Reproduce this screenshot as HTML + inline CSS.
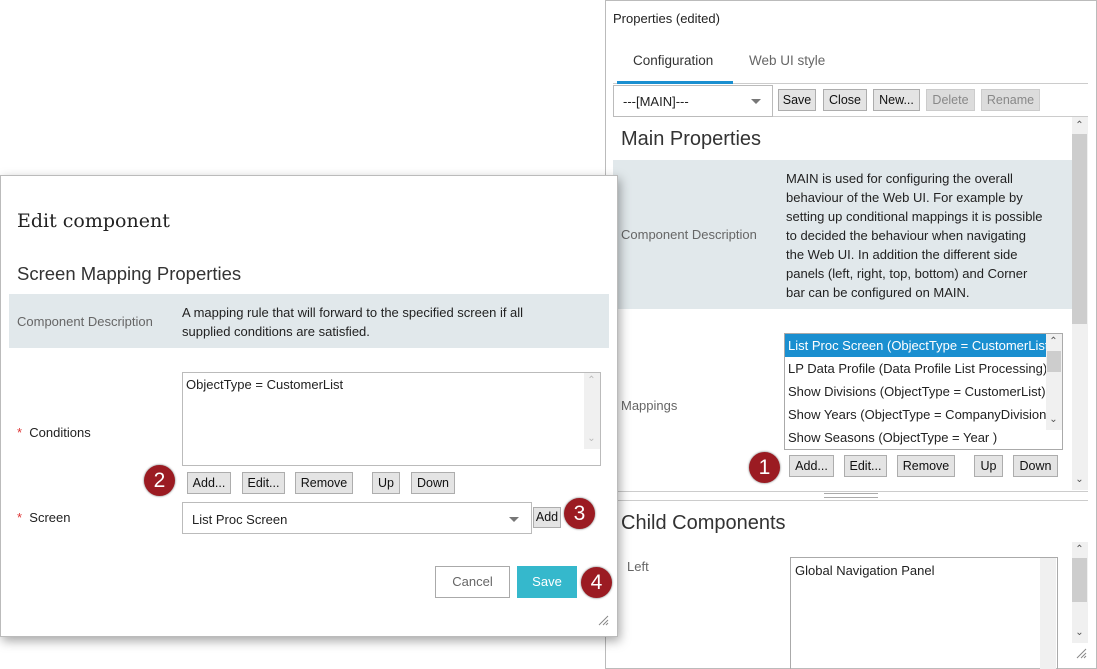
<!DOCTYPE html>
<html><head><style>
*{box-sizing:border-box;margin:0;padding:0}
body{width:1097px;height:669px;background:#fff;position:relative;overflow:hidden;font-family:"Liberation Sans",sans-serif;font-size:13px;color:#222}
.a{position:absolute}
.btn{position:absolute;background:#e4e4e4;border:1px solid #adadad;font-size:12.5px;text-align:center;line-height:20px;height:22px;color:#111}
.dis{color:#888;background:#dcdcdc;border-color:#ccc}
.circ{position:absolute;width:31px;height:31px;border-radius:50%;background:#9b1b22;color:#fff;font-size:21px;text-align:center;line-height:31px;box-shadow:0 0 2px #666}
.sb{position:absolute;background:#f0f0f0}
.thumb{position:absolute;background:#cdcdcd}
.arr{position:absolute;font-size:10px;color:#555;width:15px;text-align:center}
</style></head><body>
<!-- right panel -->
<div class="a" style="left:605px;top:0;width:492px;height:669px;border:1px solid #bbb"></div>
<div class="a" style="left:613px;top:11px;font-size:13px">Properties (edited)</div>
<div class="a" style="left:633px;top:53px;font-size:13.5px;color:#333">Configuration</div>
<div class="a" style="left:749px;top:53px;font-size:13.5px;color:#666">Web UI style</div>
<div class="a" style="left:613px;top:83px;width:475px;height:1px;background:#ccc"></div>
<div class="a" style="left:617px;top:81px;width:116px;height:3px;background:#1a8fd0"></div>
<div class="a" style="left:613px;top:85px;width:160px;height:32px;border:1px solid #bbb;font-size:13px;padding:8px 0 0 9px">---[MAIN]---</div>
<div class="a" style="left:751px;top:99px;border-left:5px solid transparent;border-right:5px solid transparent;border-top:5px solid #777"></div>
<div class="a" style="left:773px;top:116px;width:315px;height:1px;background:#ccc"></div>
<div class="btn" style="left:778px;top:89px;width:38px">Save</div>
<div class="btn" style="left:823px;top:89px;width:44px">Close</div>
<div class="btn" style="left:873px;top:89px;width:47px">New...</div>
<div class="btn dis" style="left:926px;top:89px;width:49px">Delete</div>
<div class="btn dis" style="left:981px;top:89px;width:59px">Rename</div>
<div class="sb" style="left:1072px;top:117px;width:16px;height:373px"></div>
<div class="thumb" style="left:1072px;top:134px;width:15px;height:190px"></div>
<div class="arr" style="left:1072px;top:120px">&#8963;</div>
<div class="arr" style="left:1072px;top:474px">&#8964;</div>
<div class="a" style="left:621px;top:128px;font-size:20px;color:#333">Main Properties</div>
<div class="a" style="left:613px;top:160px;width:459px;height:149px;background:#e1e8eb"></div>
<div class="a" style="left:621px;top:227px;font-size:13px;color:#666">Component Description</div>
<div class="a" style="left:786px;top:169px;width:290px;font-size:13px;line-height:19px;color:#222;white-space:nowrap">MAIN is used for configuring the overall<br>behaviour of the Web UI. For example by<br>setting up conditional mappings it is possible<br>to decided the behaviour when navigating<br>the Web UI. In addition the different side<br>panels (left, right, top, bottom) and Corner<br>bar can be configured on MAIN.</div>
<div class="a" style="left:621px;top:398px;font-size:13px;color:#666">Mappings</div>
<div class="a" style="left:784px;top:333px;width:279px;height:117px;border:1px solid #aaa;overflow:hidden;font-size:13px;line-height:23px;white-space:nowrap">
<div style="background:#1a8fd0;color:#fff;padding-left:3px;width:262px;overflow:hidden">List Proc Screen (ObjectType = CustomerList)</div>
<div style="padding-left:3px;width:262px;overflow:hidden">LP Data Profile (Data Profile List Processing)</div>
<div style="padding-left:3px;width:262px;overflow:hidden">Show Divisions (ObjectType = CustomerList)</div>
<div style="padding-left:3px;width:262px;overflow:hidden">Show Years (ObjectType = CompanyDivision)</div>
<div style="padding-left:3px;width:262px;overflow:hidden">Show Seasons (ObjectType = Year )</div>
</div>
<div class="sb" style="left:1046px;top:334px;width:16px;height:96px"></div>
<div class="thumb" style="left:1047px;top:351px;width:14px;height:21px"></div>
<div class="arr" style="left:1046px;top:336px">&#8963;</div>
<div class="arr" style="left:1046px;top:414px">&#8964;</div>
<div class="circ" style="left:749px;top:452px">1</div>
<div class="btn" style="left:789px;top:455px;width:45px">Add...</div>
<div class="btn" style="left:844px;top:455px;width:43px">Edit...</div>
<div class="btn" style="left:897px;top:455px;width:58px">Remove</div>
<div class="btn" style="left:974px;top:455px;width:29px">Up</div>
<div class="btn" style="left:1013px;top:455px;width:45px">Down</div>
<div class="a" style="left:618px;top:491px;width:470px;height:1px;background:#ccc"></div>
<div class="a" style="left:618px;top:500px;width:470px;height:1px;background:#ccc"></div>
<div class="a" style="left:824px;top:493px;width:54px;height:5px;border-top:1px solid #aaa;border-bottom:1px solid #aaa"></div>
<div class="a" style="left:621px;top:512px;font-size:20px;color:#333">Child Components</div>
<div class="a" style="left:627px;top:559px;font-size:13px;color:#666">Left</div>
<div class="a" style="left:790px;top:557px;width:268px;height:112px;border:1px solid #aaa;border-bottom:none;padding:5px 4px;font-size:13px">Global Navigation Panel</div>
<div class="sb" style="left:1040px;top:558px;width:16px;height:111px"></div>
<div class="sb" style="left:1072px;top:542px;width:16px;height:101px"></div>
<div class="thumb" style="left:1072px;top:558px;width:15px;height:44px"></div>
<div class="arr" style="left:1072px;top:544px">&#8963;</div>
<div class="arr" style="left:1072px;top:627px">&#8964;</div>
<svg class="a" style="left:1075px;top:647px" width="12" height="12"><path d="M2 11L11 2M6 11L11 6M9 11L11 9" stroke="#888" stroke-width="1"/></svg>
<!-- dialog -->
<div class="a" style="left:0;top:175px;width:618px;height:462px;background:#fff;border:1px solid #bbb;box-shadow:2px 4px 10px rgba(0,0,0,.35)"></div>
<div class="a" style="left:17px;top:210px;font-family:'DejaVu Serif','Liberation Serif',serif;font-size:19px;color:#222">Edit component</div>
<div class="a" style="left:17px;top:263px;font-size:18.5px;color:#333">Screen Mapping Properties</div>
<div class="a" style="left:9px;top:294px;width:600px;height:54px;background:#e1e8eb"></div>
<div class="a" style="left:17px;top:314px;font-size:13px;color:#666">Component Description</div>
<div class="a" style="left:182px;top:303px;width:420px;font-size:13px;line-height:19px;white-space:nowrap">A mapping rule that will forward to the specified screen if all<br>supplied conditions are satisfied.</div>
<div class="a" style="left:17px;top:425px;font-size:13px"><span style="color:#d33">*</span>&nbsp; Conditions</div>
<div class="a" style="left:182px;top:372px;width:419px;height:94px;border:1px solid #bbb;padding:4px 3px;font-size:13px">ObjectType = CustomerList</div>
<div class="sb" style="left:584px;top:373px;width:16px;height:76px"></div>
<div class="arr" style="left:584px;top:375px;color:#bbb">&#8963;</div>
<div class="arr" style="left:584px;top:433px;color:#bbb">&#8964;</div>
<div class="circ" style="left:144px;top:465px">2</div>
<div class="btn" style="left:187px;top:472px;width:44px">Add...</div>
<div class="btn" style="left:242px;top:472px;width:43px">Edit...</div>
<div class="btn" style="left:295px;top:472px;width:58px">Remove</div>
<div class="btn" style="left:372px;top:472px;width:28px">Up</div>
<div class="btn" style="left:411px;top:472px;width:44px">Down</div>
<div class="a" style="left:17px;top:510px;font-size:13px"><span style="color:#d33">*</span>&nbsp; Screen</div>
<div class="a" style="left:182px;top:502px;width:350px;height:32px;border:1px solid #bbb;padding:9px 0 0 9px;font-size:13px">List Proc Screen</div>
<div class="a" style="left:509px;top:517px;border-left:5px solid transparent;border-right:5px solid transparent;border-top:5px solid #777"></div>
<div class="btn" style="left:533px;top:507px;width:28px;height:21px;line-height:19px">Add</div>
<div class="circ" style="left:564px;top:498px">3</div>
<div class="a" style="left:435px;top:566px;width:75px;height:32px;border:1px solid #aaa;text-align:center;line-height:30px;color:#666;font-size:13px">Cancel</div>
<div class="a" style="left:517px;top:566px;width:60px;height:32px;background:#35b8cc;text-align:center;line-height:32px;color:#fff;font-size:13px">Save</div>
<div class="circ" style="left:581px;top:567px">4</div>
<svg class="a" style="left:597px;top:614px" width="12" height="12"><path d="M2 11L11 2M6 11L11 6M9 11L11 9" stroke="#888" stroke-width="1"/></svg>
</body></html>
